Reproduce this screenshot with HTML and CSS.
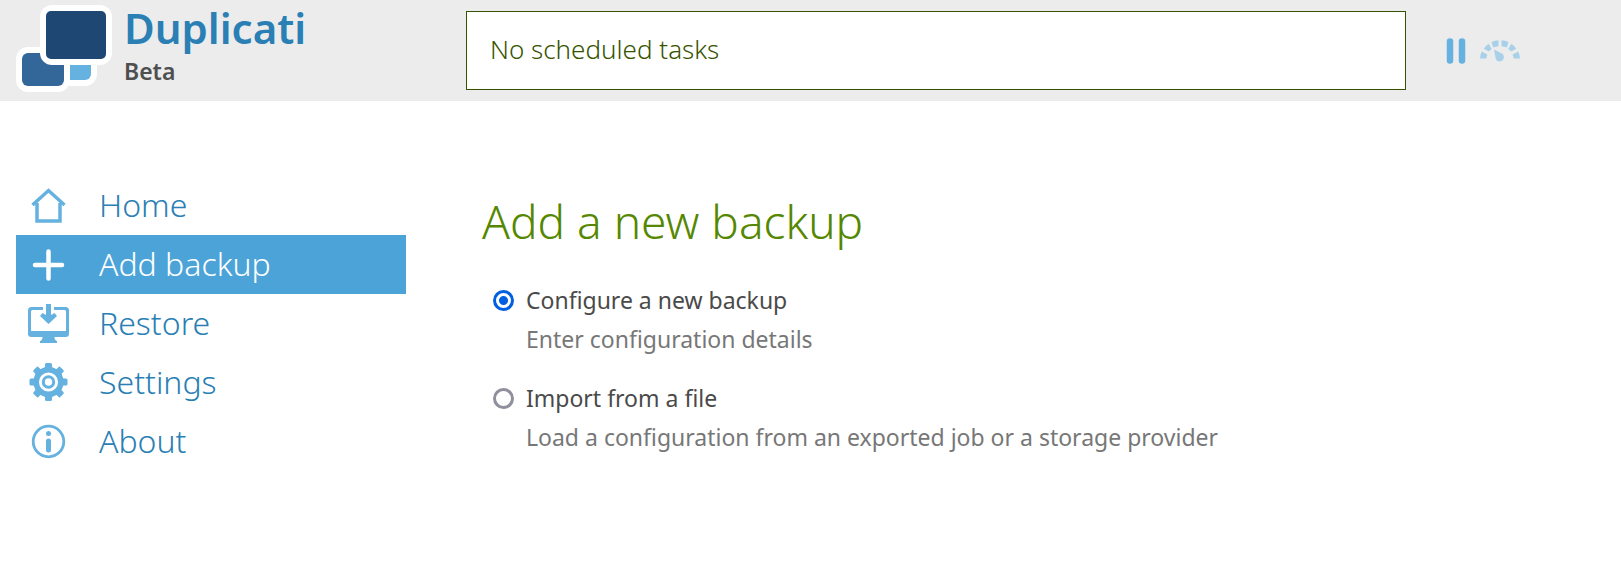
FILE: index.html
```html
<!DOCTYPE html>
<html lang="en">
<head>
  <meta charset="UTF-8">
  <title>Duplicati</title>
  <meta name="viewport" content="width=device-width, initial-scale=1.0">
  <link rel="stylesheet" href="styles.css">
</head>
<body>

<header class="header">
  <a class="brand" href="#">
    <svg class="logo" viewBox="0 0 96 88" aria-hidden="true">
      <rect x="36" y="36" width="45" height="45" rx="12" fill="#fff"/>
      <rect x="44" y="42" width="31" height="33" rx="6" fill="#65b1df"/>
      <rect x="0" y="42" width="54" height="45" rx="12" fill="#fff"/>
      <rect x="6" y="48" width="42" height="33" rx="6" fill="#336699"/>
      <rect x="24" y="0" width="72" height="60" rx="12" fill="#fff"/>
      <rect x="30" y="6" width="60" height="48" rx="5" fill="#1f4774"/>
    </svg>
    <span class="brand-text">
      <span class="brand-name">Duplicati</span>
      <span class="brand-channel">Beta</span>
    </span>
  </a>
  <div class="status">No scheduled tasks</div>
  <div class="controls">
    <button class="icon-button" aria-label="Pause">
      <svg width="20" height="26" viewBox="0 0 20 26">
        <path d="M4 3.500V22.500M16 3.500V22.500" stroke="#65b1df" stroke-width="6.500" stroke-linecap="round"/>
      </svg>
    </button>
    <button class="icon-button" aria-label="Throttle">
      <svg width="40" height="22" viewBox="0 0 40 22">
        <g fill="#a8d1e9">
          <path d="M0 18.500Q.2 14.500 1.800 11.500L7.500 14.500Q6.500 16 6.500 18.500Z"/>
          <path d="M3.800 8.800Q6 5.500 8.500 3.800L11.800 9Q10 10 8.800 11.600Z"/>
          <path d="M11.500 2Q15 .3 18.500 .3V6.300Q15.500 6.500 13.200 7.500Z"/>
          <path d="M28.500 2Q25 .3 21.500 .3V6.300Q24.500 6.500 26.800 7.500Z"/>
          <path d="M36.200 8.800Q34 5.500 31.500 3.800L28.200 9Q30 10 31.200 11.600Z"/>
          <path d="M40 18.500Q39.800 14.500 38.200 11.500L32.500 14.500Q33.500 16 33.500 18.500Z"/>
          <path d="M14 9.500L22 13.500Q24.500 15.500 23.700 18.500Q22.500 21.500 19.500 21.500Q16.500 21.500 15.600 18Z"/>
        </g>
      </svg>
    </button>
  </div>
</header>

<div class="content">
  <nav class="menu">
    <a class="menu-item" href="#">
      <svg class="menu-icon" viewBox="0 0 42 42">
        <path d="M4.500 21L20.500 6.500L36.500 21" fill="none" stroke="#65b1df" stroke-width="3.500"/>
        <path d="M9 19V37H32V19" fill="none" stroke="#65b1df" stroke-width="3.500"/>
      </svg>
      Home
    </a>
    <a class="menu-item active" href="#">
      <svg class="menu-icon" viewBox="0 0 42 42">
        <path d="M20.500 8.500V35.500M7 22H34" fill="none" stroke="#fff" stroke-width="4.500" stroke-linecap="round"/>
      </svg>
      Add backup
    </a>
    <a class="menu-item" href="#">
      <svg class="menu-icon" viewBox="0 0 42 42">
        <path d="M15 5H3.500Q0 5 0 8.500V32Q0 35 3.500 35H14.500Q14.500 38.500 12 39V41H29V39Q26.500 38.500 26.500 35H37.500Q41 35 41 32V8.500Q41 5 37.500 5H26V8H36.500Q38 8 38 9.500V29H3V9.500Q3 8 4.500 8H15Z" fill="#65b1df"/>
        <path d="M18 2H23V13L26.500 11L29 14L20.500 22L12 14L14.500 11L18 13Z" fill="#65b1df"/>
      </svg>
      Restore
    </a>
    <a class="menu-item" href="#">
      <svg class="menu-icon" viewBox="0 0 42 42">
        <g transform="translate(0 1)">
          <circle cx="20.500" cy="20" r="12.300" fill="none" stroke="#65b1df" stroke-width="5.500"/>
          <circle cx="20.500" cy="20" r="5.200" fill="none" stroke="#65b1df" stroke-width="3"/>
          <g fill="#65b1df">
            <path id="tooth" d="M15.500 7L17 5V2.500Q17 1 18.500 1H22.500Q24 1 24 2.500V5L25.500 7Z"/>
            <use href="#tooth" transform="rotate(45 20.500 20)"/>
            <use href="#tooth" transform="rotate(90 20.500 20)"/>
            <use href="#tooth" transform="rotate(135 20.500 20)"/>
            <use href="#tooth" transform="rotate(180 20.500 20)"/>
            <use href="#tooth" transform="rotate(225 20.500 20)"/>
            <use href="#tooth" transform="rotate(270 20.500 20)"/>
            <use href="#tooth" transform="rotate(315 20.500 20)"/>
          </g>
        </g>
      </svg>
      Settings
    </a>
    <a class="menu-item" href="#">
      <svg class="menu-icon" viewBox="0 0 42 42">
        <circle cx="20.500" cy="21.500" r="15.300" fill="none" stroke="#65b1df" stroke-width="2.800"/>
        <circle cx="20.500" cy="13.500" r="2.500" fill="#65b1df"/>
        <path d="M20.500 21V30" stroke="#65b1df" stroke-width="5" stroke-linecap="round"/>
      </svg>
      About
    </a>
  </nav>

  <main class="page">
    <h1 class="page-title">Add a new backup</h1>
    <form class="options">
      <div class="option">
        <input type="radio" class="radio" name="source" id="source-new" checked>
        <label class="option-label" for="source-new">Configure a new backup</label>
        <p class="option-hint">Enter configuration details</p>
      </div>
      <div class="option">
        <input type="radio" class="radio" name="source" id="source-file">
        <label class="option-label" for="source-file">Import from a file</label>
        <p class="option-hint">Load a configuration from an exported job or a storage provider</p>
      </div>
    </form>
  </main>
</div>

</body>
</html>
```

FILE: styles.css
```css
* { box-sizing: border-box; }
body {
  margin: 0;
  background: #fff;
  color: #4a4a4a;
  font-family: "Noto Sans", sans-serif;
  font-size: 23px;
}
a {
  color: #2a7fb4;
  text-decoration: none;
}
.header {
  display: flex;
  align-items: flex-start;
  height: 101px;
  background: #ececec;
}
.brand {
  display: flex;
  flex: 0 0 466px;
  gap: 12px;
  padding: 5px 0 0 16px;
}
.logo {
  width: 96px;
  height: 88px;
}
.brand-text {
  display: flex;
  flex-direction: column;
}
.brand-name {
  font-size: 42px;
  font-weight: 600;
  line-height: 46px;
}
.brand-channel {
  color: #4f4f4f;
  font-size: 23px;
  font-weight: 600;
  line-height: 40px;
}
.status {
  flex: 1;
  height: 79px;
  margin-top: 11px;
  padding: 0 23px;
  border: 1px solid #365300;
  background: #fff;
  color: #365300;
  font-size: 26px;
  font-weight: 300;
  line-height: 75px;
}
.controls {
  display: flex;
  flex: 0 0 215px;
  gap: 14px;
  padding: 38px 0 0 40px;
}
.icon-button {
  display: flex;
  align-items: center;
  padding: 0;
  border: none;
  background: none;
  cursor: pointer;
}
.content {
  display: flex;
  gap: 76px;
  padding: 75px 16px 40px;
}
.menu { flex: 0 0 390px; }
.menu-item {
  display: flex;
  align-items: center;
  gap: 29px;
  height: 59px;
  padding: 0 0 2px 12px;
  font-size: 32px;
  font-weight: 300;
}
.menu-item.active {
  background: #4ca3d8;
  color: #fff;
}
.menu-icon {
  width: 42px;
  height: 42px;
}
.page { flex: 1; }
.page-title {
  margin: 13px 0 28px;
  color: #568700;
  font-size: 46px;
  font-weight: 300;
  line-height: 64px;
}
.option {
  display: grid;
  grid-template-columns: 21px 1fr;
  column-gap: 12px;
  align-items: center;
  margin-bottom: 20px;
  padding-left: 11px;
  line-height: 39px;
}
.radio {
  width: 21px;
  height: 21px;
  margin: 0;
  appearance: none;
  border: 3px solid #8f8f9d;
  border-radius: 50%;
  background: #fff;
}
.radio:checked {
  border-color: #0060df;
  background: radial-gradient(circle, #0060df 4px, #fff 5px);
}
.option-hint {
  grid-column: 2;
  margin: 0;
  color: #777;
}
```
